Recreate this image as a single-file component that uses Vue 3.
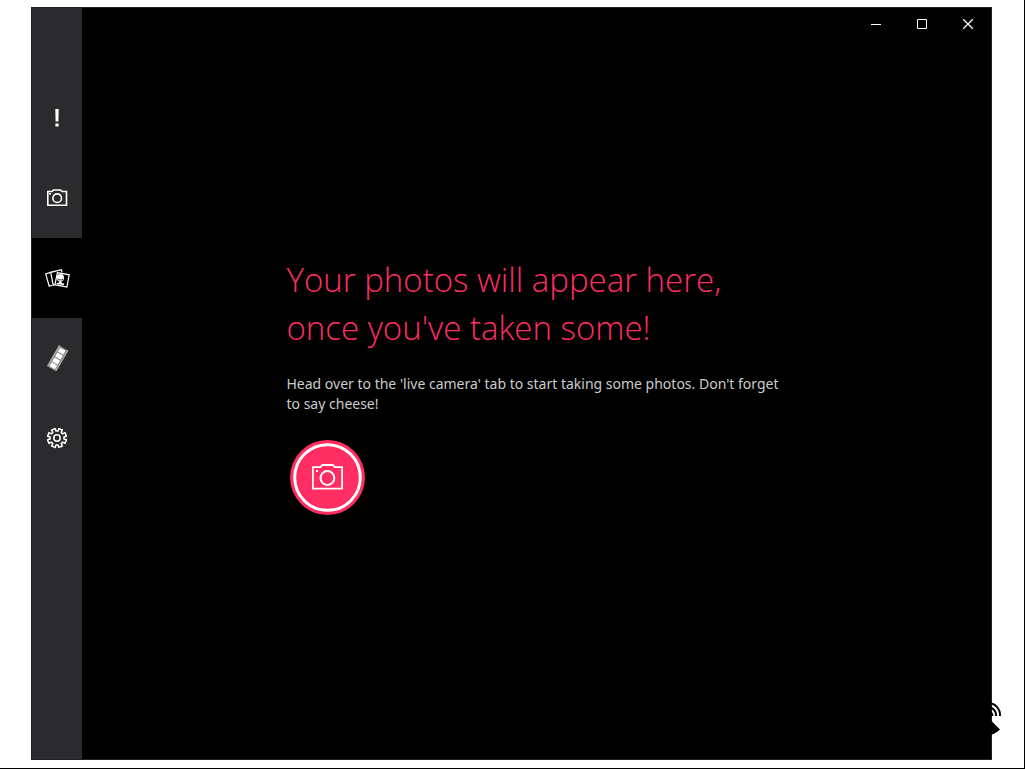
<script setup>
import { ref } from 'vue'

const active = ref('photos')
const tabs = [
  { id: 'alerts', label: 'Alerts' },
  { id: 'camera', label: 'Live camera' },
  { id: 'photos', label: 'Photos' },
  { id: 'film', label: 'Film strip' },
  { id: 'settings', label: 'Settings' },
]

const gear = Array.from({ length: 8 }, (_, i) => {
  const c = ((i + 0.5) * Math.PI) / 4
  const at = (r, o) => `${(13 + r * Math.cos(c + o)).toFixed(2)} ${(13 + r * Math.sin(c + o)).toFixed(2)}`
  return `${i ? 'L' : 'M'}${at(7, -0.24)} L${at(9.6, -0.2)} L${at(9.6, 0.2)} L${at(7, 0.24)}`
}).join(' ') + 'Z'
</script>

<template>
  <div class="desktop">
    <div class="window">
      <nav class="sidebar" aria-label="Sections">
        <button
          v-for="tab in tabs"
          :key="tab.id"
          class="tab"
          :class="{ active: active === tab.id }"
          :aria-label="tab.label"
          @click="active = tab.id"
        >
          <svg v-if="tab.id === 'alerts'" class="icon" viewBox="0 0 26 26">
            <path d="M11.3 4h3.4l-.3 12.6h-2.8zM11.4 18.6h3.2v3h-3.2z" fill="#fff" />
          </svg>
          <svg v-else-if="tab.id === 'camera'" class="icon" viewBox="0 0 26 26" fill="none" stroke="#fff" stroke-width="1.6">
            <path d="M3.8 6.5H8L9.5 5h7L18 6.500h4.500v13.700H3.800z" />
            <circle cx="13.200" cy="13.200" r="4.300" />
            <path d="M5 8.800h2" />
          </svg>
          <svg v-else-if="tab.id === 'photos'" class="icon" viewBox="0 0 26 26" fill="none" stroke="#fff" stroke-width="1.2">
            <path d="M8 20.200 5.200 21.200 1.700 9l5-1.600" />
            <path d="M10.800 19.800 9.200 20.200 6.700 7.300l10.600-2.600.7 2.600" />
            <path d="m13.400 7.600 11.800 2.200-2.300 12.200-12-2.300z" fill="#000" />
            <circle cx="16.300" cy="12.800" r="3.700" fill="#fff" stroke="none" />
            <path d="M13.600 13.900c.6 1.400 4.600 1.700 5.200.2" stroke="#000" stroke-width="1" />
            <path d="M15.300 15.500h2.200v2.200l2.600 1-.2 1.600-7.300-1.300.2-1 2.500-.6z" fill="#fff" stroke="none" />
          </svg>
          <svg v-else-if="tab.id === 'film'" class="icon" viewBox="0 0 26 26">
            <g transform="rotate(30 13 13)">
              <path d="M8.200 1h11v24h-11z" fill="#8c8c8c" />
              <path d="M9 1v24M18.400 1v24" stroke="#c8c8c8" stroke-width="1.2" stroke-dasharray="1 1" />
              <path d="M10.600 2.500h6.200v4.400h-6.200zM10.600 8h6.200v4.600h-6.200zM10.600 13.700h6.200v4.600h-6.200zM10.600 19.400h6.200v4.400h-6.200z" fill="#fff" />
            </g>
          </svg>
          <svg v-else class="icon" viewBox="0 0 26 26" fill="none" stroke="#fff" stroke-width="1.5" stroke-linejoin="round">
            <path :d="gear" />
            <circle cx="13" cy="13" r="3.2" />
          </svg>
        </button>
      </nav>

      <main class="main">
        <header class="titlebar">
          <button class="caption" aria-label="Minimize">
            <svg class="glyph" viewBox="0 0 11 11"><path d="M0 5.5h10" /></svg>
          </button>
          <button class="caption" aria-label="Maximize">
            <svg class="glyph" viewBox="0 0 11 11"><path d="M.5.5h9v9h-9z" /></svg>
          </button>
          <button class="caption" aria-label="Close">
            <svg class="glyph cross" viewBox="0 0 11 11"><path d="m.2.2 9.6 9.6M9.8.2.2 9.800" /></svg>
          </button>
        </header>

        <section class="empty">
          <h1 class="title">Your photos will appear here, once you've taken some!</h1>
          <p class="hint">Head over to the 'live camera' tab to start taking some photos. Don't forget to say cheese!</p>
          <button class="shoot" aria-label="Open live camera" @click="active = 'camera'">
            <svg class="shoot-icon" viewBox="0 0 75 75" fill="none" stroke="#fff">
              <circle cx="37.5" cy="37.5" r="32.8" stroke-width="3" />
              <path d="M22.900 27.200h7.500l2-2.200h10.400l2 2.200h7.300v21.500H22.900z" stroke-width="1.8" />
              <circle cx="37.400" cy="38" r="6.900" stroke-width="2" />
              <path d="M26 31.200h2" stroke-width="1.8" />
            </svg>
          </button>
        </section>
      </main>
    </div>

    <svg class="dish" viewBox="0 0 36 40" fill="none" stroke="#000" stroke-width="2">
      <path d="M22 3a12 12 0 0 1 12 13M22 7a8.500 8.500 0 0 1 8.200 9M22 11a5 5 0 0 1 4.600 5" />
      <path d="M8 5 25 20.500 34 29.500C31 32 29 33.500 26 34.500 18 37 9 34 6 30 1 23 2 11 8 5z" fill="#000" stroke="none" />
    </svg>
  </div>
</template>

<style>
body {
  margin: 0;
}
</style>

<style scoped>
.desktop {
  position: relative;
  box-sizing: border-box;
  display: flex;
  min-height: 100vh;
  padding: 7px 32px 8px 31px;
  border: solid #000;
  border-width: 0 1px 1px 0;
  background: #fff;
  font-family: "Open Sans", "Noto Sans", sans-serif;
}

.window {
  flex: 1;
  display: flex;
  border: 1px solid #222224;
  background: #000;
}

.sidebar {
  display: flex;
  flex-direction: column;
  width: 50px;
  padding-top: 70px;
  background: #2b2b2d;
}

.tab {
  display: flex;
  align-items: center;
  justify-content: center;
  height: 80px;
  padding: 0;
  border: 0;
  background: none;
}

.tab.active {
  background: #000;
}

.icon {
  width: 26px;
  height: 26px;
}

.main {
  flex: 1;
  display: flex;
  flex-direction: column;
}

.titlebar {
  display: flex;
  justify-content: flex-end;
  height: 32px;
}

.caption {
  display: flex;
  align-items: center;
  justify-content: center;
  width: 46px;
  padding: 0;
  border: 0;
  background: none;
}

.glyph {
  width: 11px;
  height: 11px;
  fill: none;
  stroke: #fff;
  stroke-width: 1;
}

.glyph.cross {
  stroke-width: 1.3;
}

.empty {
  flex: 1;
  display: flex;
  flex-direction: column;
  justify-content: center;
  align-items: flex-start;
  box-sizing: border-box;
  width: 100%;
  max-width: 500px;
  margin: 0 auto;
  padding-bottom: 28px;
}

.title {
  max-width: 460px;
  margin: 0 0 22px;
  color: #ff2d61;
  font-size: 33px;
  font-weight: 300;
  line-height: 48px;
}

.hint {
  margin: 0 0 26px;
  color: #ccc;
  font-family: "Noto Sans", "Open Sans", sans-serif;
  font-size: 14px;
  line-height: 20px;
}

.shoot {
  width: 75px;
  height: 75px;
  margin-left: 3px;
  padding: 0;
  border: 0;
  border-radius: 50%;
  background: #ff2d61;
}

.shoot-icon {
  display: block;
  width: 75px;
  height: 75px;
}

.dish {
  position: absolute;
  right: 22px;
  bottom: 28px;
  width: 36px;
  height: 40px;
}
</style>
